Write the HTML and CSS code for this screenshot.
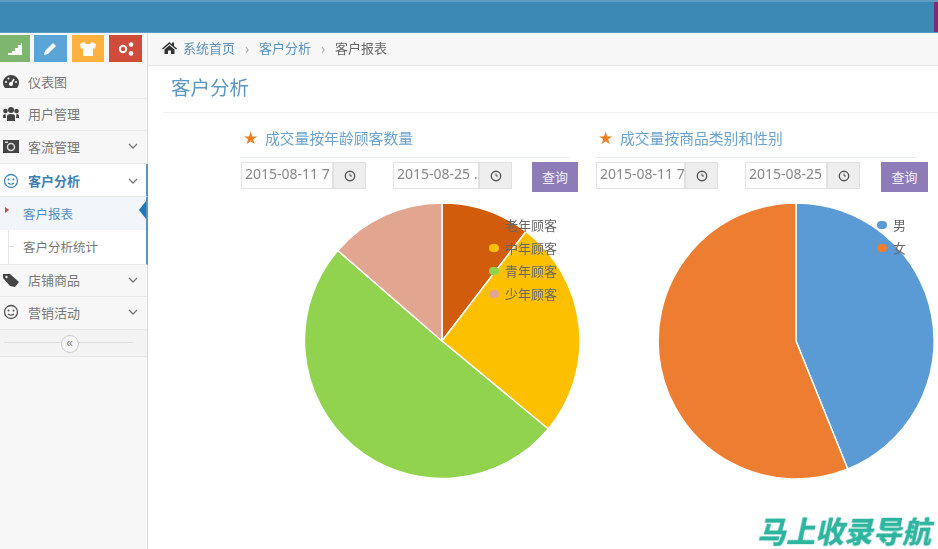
FILE: index.html
```html
<!DOCTYPE html>
<html lang="zh">
<head>
<meta charset="utf-8">
<title>客户报表</title>
<link rel="stylesheet" href="styles.css">
</head>
<body>
<div class="page">
  <header class="topbar"><span class="topbar-end"></span></header>
  <div class="main">
    <aside class="sidebar">
      <div class="shortcuts">
        <a class="sc sc-green"><svg width="18" height="14" viewBox="0 0 18 14"><path d="M2 13v-2h4V9h3V6h3V3h3V1h1v12z" fill="#fff"/></svg></a>
        <a class="sc sc-blue"><svg width="16" height="16" viewBox="0 0 16 16"><path d="M2 14l1-4 8-8 3 3-8 8z" fill="#fff"/></svg></a>
        <a class="sc sc-orange"><svg width="18" height="16" viewBox="0 0 18 16"><path d="M1 3l4-2 2 2h4l2-2 4 2-1 5-2-1v8H4V7L2 8z" fill="#fff"/></svg></a>
        <a class="sc sc-red"><svg width="16" height="14" viewBox="0 0 16 14"><circle cx="5" cy="7" r="3.2" fill="none" stroke="#fff" stroke-width="2"/><circle cx="13" cy="2.6" r="2.3" fill="#fff"/><circle cx="13" cy="11.4" r="2.3" fill="#fff"/></svg></a>
      </div>
      <nav class="menu">
        <a class="item"><svg class="ico" width="18" height="16" viewBox="0 0 18 16"><path d="M9 2a8 7.500 0 0 0-8 7.500c0 2.200.7 4 2 5.500h12c1.300-1.500 2-3.300 2-5.500A8 7.500 0 0 0 9 2z" fill="#444"/><circle cx="9" cy="11" r="2" fill="#fff"/><path d="M9 11l3-5" stroke="#fff" stroke-width="1.500"/><circle cx="4" cy="9" r="1" fill="#fff"/><circle cx="6.500" cy="5.500" r="1" fill="#fff"/><circle cx="14" cy="9" r="1" fill="#fff"/></svg><span>仪表图</span></a>
        <a class="item"><svg class="ico" width="18" height="16" viewBox="0 0 18 16"><circle cx="9" cy="4" r="3" fill="#444"/><circle cx="3.500" cy="5" r="2.300" fill="#444"/><circle cx="14.500" cy="5" r="2.300" fill="#444"/><path d="M5 15V10q0-2 4-2t4 2v5z" fill="#444"/><path d="M1 12V9.500Q1 8 3.500 8L4 12zM17 12V9.500Q17 8 14.500 8L14 12z" fill="#444"/></svg><span>用户管理</span></a>
        <a class="item"><svg class="ico" width="18" height="16" viewBox="0 0 18 16"><path d="M1 2h16v13H1z" fill="#444"/><path d="M3 3.500h3V5H3z" fill="#ddd"/><circle cx="9" cy="9" r="3.500" fill="none" stroke="#ddd" stroke-width="1.500"/></svg><span>客流管理</span><svg class="chev" width="10" height="6" viewBox="0 0 10 6"><path d="M1 1l4 4 4-4" fill="none" stroke="#777" stroke-width="1.300"/></svg></a>
        <a class="item item-active"><svg class="ico" width="16" height="16" viewBox="0 0 16 16"><circle cx="8" cy="8" r="6.500" fill="none" stroke="#3f87bd" stroke-width="1.300"/><circle cx="5.500" cy="6.500" r="1" fill="#3f87bd"/><circle cx="10.500" cy="6.500" r="1" fill="#3f87bd"/><path d="M5 10q3 2.500 6 0" fill="none" stroke="#3f87bd" stroke-width="1.200"/></svg><span>客户分析</span><svg class="chev" width="10" height="6" viewBox="0 0 10 6"><path d="M1 1l4 4 4-4" fill="none" stroke="#777" stroke-width="1.300"/></svg></a>
        <div class="submenu">
          <a class="sub sub-current">客户报表</a>
          <a class="sub sub-plain">客户分析统计</a>
        </div>
        <a class="item"><svg class="ico" width="18" height="16" viewBox="0 0 18 16"><path d="M1 2h7l9 8-4 5-5-1-7-8z" fill="#444"/><circle cx="4.500" cy="5" r="1.200" fill="#f8f8f8"/></svg><span>店铺商品</span><svg class="chev" width="10" height="6" viewBox="0 0 10 6"><path d="M1 1l4 4 4-4" fill="none" stroke="#777" stroke-width="1.300"/></svg></a>
        <a class="item"><svg class="ico" width="16" height="16" viewBox="0 0 16 16"><circle cx="8" cy="8" r="6.500" fill="none" stroke="#555" stroke-width="1.300"/><circle cx="5.500" cy="6.500" r="1" fill="#555"/><circle cx="10.500" cy="6.500" r="1" fill="#555"/><path d="M5 10q3 2.500 6 0" fill="none" stroke="#555" stroke-width="1.200"/></svg><span>营销活动</span><svg class="chev" width="10" height="6" viewBox="0 0 10 6"><path d="M1 1l4 4 4-4" fill="none" stroke="#777" stroke-width="1.300"/></svg></a>
        <div class="collapse"><span class="collapse-btn">«</span></div>
      </nav>
    </aside>
    <section class="content">
      <div class="crumbs">
        <svg class="home" width="15" height="13" viewBox="0 0 15 13"><path d="M7.500 1 0 7.500l1 1L7.500 3 14 8.500l1-1-3-2.600V1.500h-2v1.700zM2.500 8.500V13h3.500V9.500h3V13h3.500V8.500l-5-4.200z" fill="#333"/></svg>
        <a class="crumb-link">系统首页</a><span class="sep">›</span>
        <a class="crumb-link">客户分析</a><span class="sep">›</span>
        <span class="crumb-now">客户报表</span>
      </div>
      <h1 class="title">客户分析</h1>
      <div class="charts">
        <div class="pane pane-a">
          <h2 class="pane-head"><span class="star">★</span>成交量按年龄顾客数量</h2>
          <div class="controls">
            <div class="group g-a1"><span class="field">2015-08-11 7</span><span class="addon"><svg width="12" height="12" viewBox="0 0 12 12"><circle cx="6" cy="6" r="4.700" fill="none" stroke="#555" stroke-width="1.400"/><path d="M6 3.500V6h2" fill="none" stroke="#555"/></svg></span></div>
            <div class="group g-a2"><span class="field">2015-08-25 .</span><span class="addon"><svg width="12" height="12" viewBox="0 0 12 12"><circle cx="6" cy="6" r="4.700" fill="none" stroke="#555" stroke-width="1.400"/><path d="M6 3.500V6h2" fill="none" stroke="#555"/></svg></span></div>
            <a class="query q-a">查询</a>
          </div>
          <svg class="pie" width="276" height="276" viewBox="-138 -138 276 276">
            <g stroke="#fff" stroke-width="1.500">
              <path d="M0 0V-138A138 138 0 0 1 84-109.500Z" fill="#d15c0c"/>
              <path d="M0 0L84-109.500A138 138 0 0 1 106.300 88Z" fill="#fdc000"/>
              <path d="M0 0L106.300 88A138 138 0 1 1-104.200-90.500Z" fill="#91d24e"/>
              <path d="M0 0L-104.200-90.500A138 138 0 0 1 0-138Z" fill="#e2a690"/>
            </g>
          </svg>
          <ul class="legend legend-a">
            <li><i class="dot d-dark"></i>老年顾客</li>
            <li><i class="dot d-yellow"></i>中年顾客</li>
            <li><i class="dot d-green"></i>青年顾客</li>
            <li><i class="dot d-salmon"></i>少年顾客</li>
          </ul>
        </div>
        <div class="pane pane-b">
          <h2 class="pane-head"><span class="star">★</span>成交量按商品类别和性别</h2>
          <div class="controls">
            <div class="group g-b1"><span class="field">2015-08-11 7</span><span class="addon"><svg width="12" height="12" viewBox="0 0 12 12"><circle cx="6" cy="6" r="4.700" fill="none" stroke="#555" stroke-width="1.400"/><path d="M6 3.500V6h2" fill="none" stroke="#555"/></svg></span></div>
            <div class="group g-b2"><span class="field">2015-08-25</span><span class="addon"><svg width="12" height="12" viewBox="0 0 12 12"><circle cx="6" cy="6" r="4.700" fill="none" stroke="#555" stroke-width="1.400"/><path d="M6 3.500V6h2" fill="none" stroke="#555"/></svg></span></div>
            <a class="query q-b">查询</a>
          </div>
          <svg class="pie" width="276" height="276" viewBox="-138 -138 276 276">
            <g stroke="#fff" stroke-width="1.500">
              <path d="M0 0V-138A138 138 0 0 1 51.700 128Z" fill="#5b9bd5"/>
              <path d="M0 0L51.700 128A138 138 0 1 1 0-138Z" fill="#ed7d31"/>
            </g>
          </svg>
          <ul class="legend legend-b">
            <li><i class="dot d-blue"></i>男</li>
            <li><i class="dot d-orange"></i>女</li>
          </ul>
        </div>
      </div>
    </section>
  </div>
  <div class="watermark">马上收录导航</div>
</div>
</body>
</html>
```
FILE: styles.css
```css
* { box-sizing: border-box; }
html, body { margin: 0; padding: 0; background: #fff; }
body { font-family: "Noto Sans CJK SC", "Liberation Sans", sans-serif; color: #666; }
.page { position: relative; width: 938px; height: 549px; overflow: hidden; filter: blur(0.45px); }
.topbar { display: flex; justify-content: flex-end; height: 33px; background: #3d89b5; border-top: 2px solid #5d9dbd; border-bottom: 1px solid #5b9dc2; }
.topbar-end { width: 4px; background: #7b2f6f; }
.main { display: flex; height: 516px; }

.sidebar { width: 148px; flex: none; background: #f7f7f7; border-right: 1px solid #dcdcdc; padding-top: 2px; }
.shortcuts { display: flex; gap: 4px; padding: 0 5px 4px 0; height: 31px; }
.sc { display: flex; align-items: center; justify-content: center; height: 27px; width: 33px; }
.sc-green { background: #7eb56f; width: 30px; }
.sc-blue { background: #5ba4d8; }
.sc-orange { background: #fdb13f; margin-left: 1px; }
.sc-red { background: #cf4b3a; margin-left: 1px; }
.menu { display: flex; flex-direction: column; }
.item { display: flex; align-items: center; height: 32.500px; padding: 1px 9px 2px 2px; font-size: 13px; color: #777; border-bottom: 1px solid #e8e8e8; }
.item .ico { width: 18px; flex: none; margin-right: 8px; }
.item span { flex: 1; }
.chev { flex: none; }
.item-active { height: 33px; padding-top: 2px; padding-bottom: 0; background: #fff; color: #3f7fb5; font-weight: 700; border-right: 2px solid #5a94bf; margin-right: -1px; padding-right: 8px; }
.submenu { display: flex; flex-direction: column; background: #fff; border-right: 2px solid #5a94bf; margin-right: -1px; border-bottom: 1px solid #e8e8e8; position: relative; }
.submenu::before { content: ""; position: absolute; left: 8px; top: 0; bottom: 0; border-left: 1px solid #dfe6ec; }
.sub { display: flex; align-items: center; height: 33.500px; padding-left: 23px; font-size: 12.500px; position: relative; }
.sub-current { background: #f2f5f9; color: #4f8fc4; }
.sub-current::before { content: ""; position: absolute; left: 5px; top: 10px; border-left: 4px solid #d0492e; border-top: 3px solid transparent; border-bottom: 3px solid transparent; }
.sub-current::after { content: ""; position: absolute; right: 0; top: 4px; border-right: 7px solid #1f76b8; border-top: 9px solid transparent; border-bottom: 9px solid transparent; }
.sub-plain { color: #777; }
.sub-plain::before { content: ""; position: absolute; left: 9px; top: 16px; width: 5px; border-top: 1px solid #ddd; }
.collapse { display: flex; align-items: center; justify-content: center; height: 27.500px; background: #f3f3f3; border-bottom: 1px solid #e6e6e6; position: relative; }
.collapse::before { content: ""; position: absolute; left: 4px; right: 14px; top: 12px; border-top: 1px solid #dedede; }
.collapse-btn { position: relative; width: 18px; height: 18px; margin: 3px 8px 0 0; border: 1px solid #ccc; border-radius: 50%; background: #f7f7f7; font: 12px/15px "Liberation Sans", sans-serif; color: #888; text-align: center; }

.content { flex: 1; min-width: 0; }
.crumbs { display: flex; align-items: center; height: 33px; padding: 0 0 3px 14px; background: #f7f7f7; border-bottom: 1px solid #e6e6e6; font-size: 13px; color: #666; }
.home { margin-right: 6px; }
.crumb-link { color: #5b93bd; }
.sep { width: 24px; text-align: center; color: #aaa; font-size: 15px; line-height: 1; }
.title { margin: 7px 0 0 15px; padding: 0 0 9px 8px; height: 40px; font-size: 19.500px; font-weight: 400; line-height: 28px; color: #5b98c4; border-bottom: 1px solid #eef0f2; }
.charts { display: flex; padding: 15px 0 0 92px; }
.pane { position: relative; width: 355px; flex: none; }
.pane-head { display: flex; align-items: center; margin: 0; height: 30px; padding: 0 0 10px 3px; font-size: 14.800px; font-weight: 400; color: #6ba3cf; border-bottom: 1px solid #e6edf3; }
.pane-a .pane-head { width: 330px; }
.pane-b .pane-head { width: 322px; }
.star { color: #f07f22; font-size: 17px; width: 22px; font-family: "DejaVu Sans", sans-serif; }
.controls { display: flex; align-items: flex-start; margin-top: 4px; height: 30px; }
.group { display: flex; height: 27px; }
.field { display: block; overflow: hidden; white-space: nowrap; flex: 1; padding: 0 0 0 3px; font: 14px/22px "Noto Sans", sans-serif; color: #888; background: #fff; border: 1px solid #e3e3e3; }
.addon { display: flex; align-items: center; justify-content: center; width: 33px; flex: none; background: #eee; border: 1px solid #e0e0e0; }
.g-a1 { width: 125px; margin-left: 1px; }
.g-a2 { width: 119px; margin-left: 27px; }
.g-b1 { width: 122px; margin-left: 1px; }
.g-b2 { width: 115px; margin-left: 27px; }
.query { display: flex; align-items: center; justify-content: center; height: 30px; padding-bottom: 2px; background: #8e7cb9; color: #f0ecf7; font-size: 13px; }
.q-a { width: 46px; margin-left: 20px; }
.q-b { width: 47px; margin-left: 21px; }
.pie { display: block; margin: 11px 0 0 64px; }
.pane-b .pie { margin-left: 63px; }
.legend { position: absolute; top: 85px; margin: 0; padding: 0; list-style: none; font-size: 13px; line-height: 23px; color: #666; }
.legend li { display: flex; align-items: center; }
.legend-a { left: 249px; }
.legend-b { left: 282px; }
.dot { width: 10px; height: 8px; border-radius: 4px; margin-right: 6px; }
.d-dark { background: #d15c0c; }
.d-yellow { background: #fdc000; }
.d-green { background: #91d24e; }
.d-salmon { background: #e2a690; }
.d-blue { background: #5b9bd5; }
.d-orange { background: #ed7d31; }

.watermark { position: absolute; right: 4px; bottom: 3px; font-size: 29px; line-height: 34px; font-weight: 900; color: #2db5a0; transform: skewX(-12deg); }
```
